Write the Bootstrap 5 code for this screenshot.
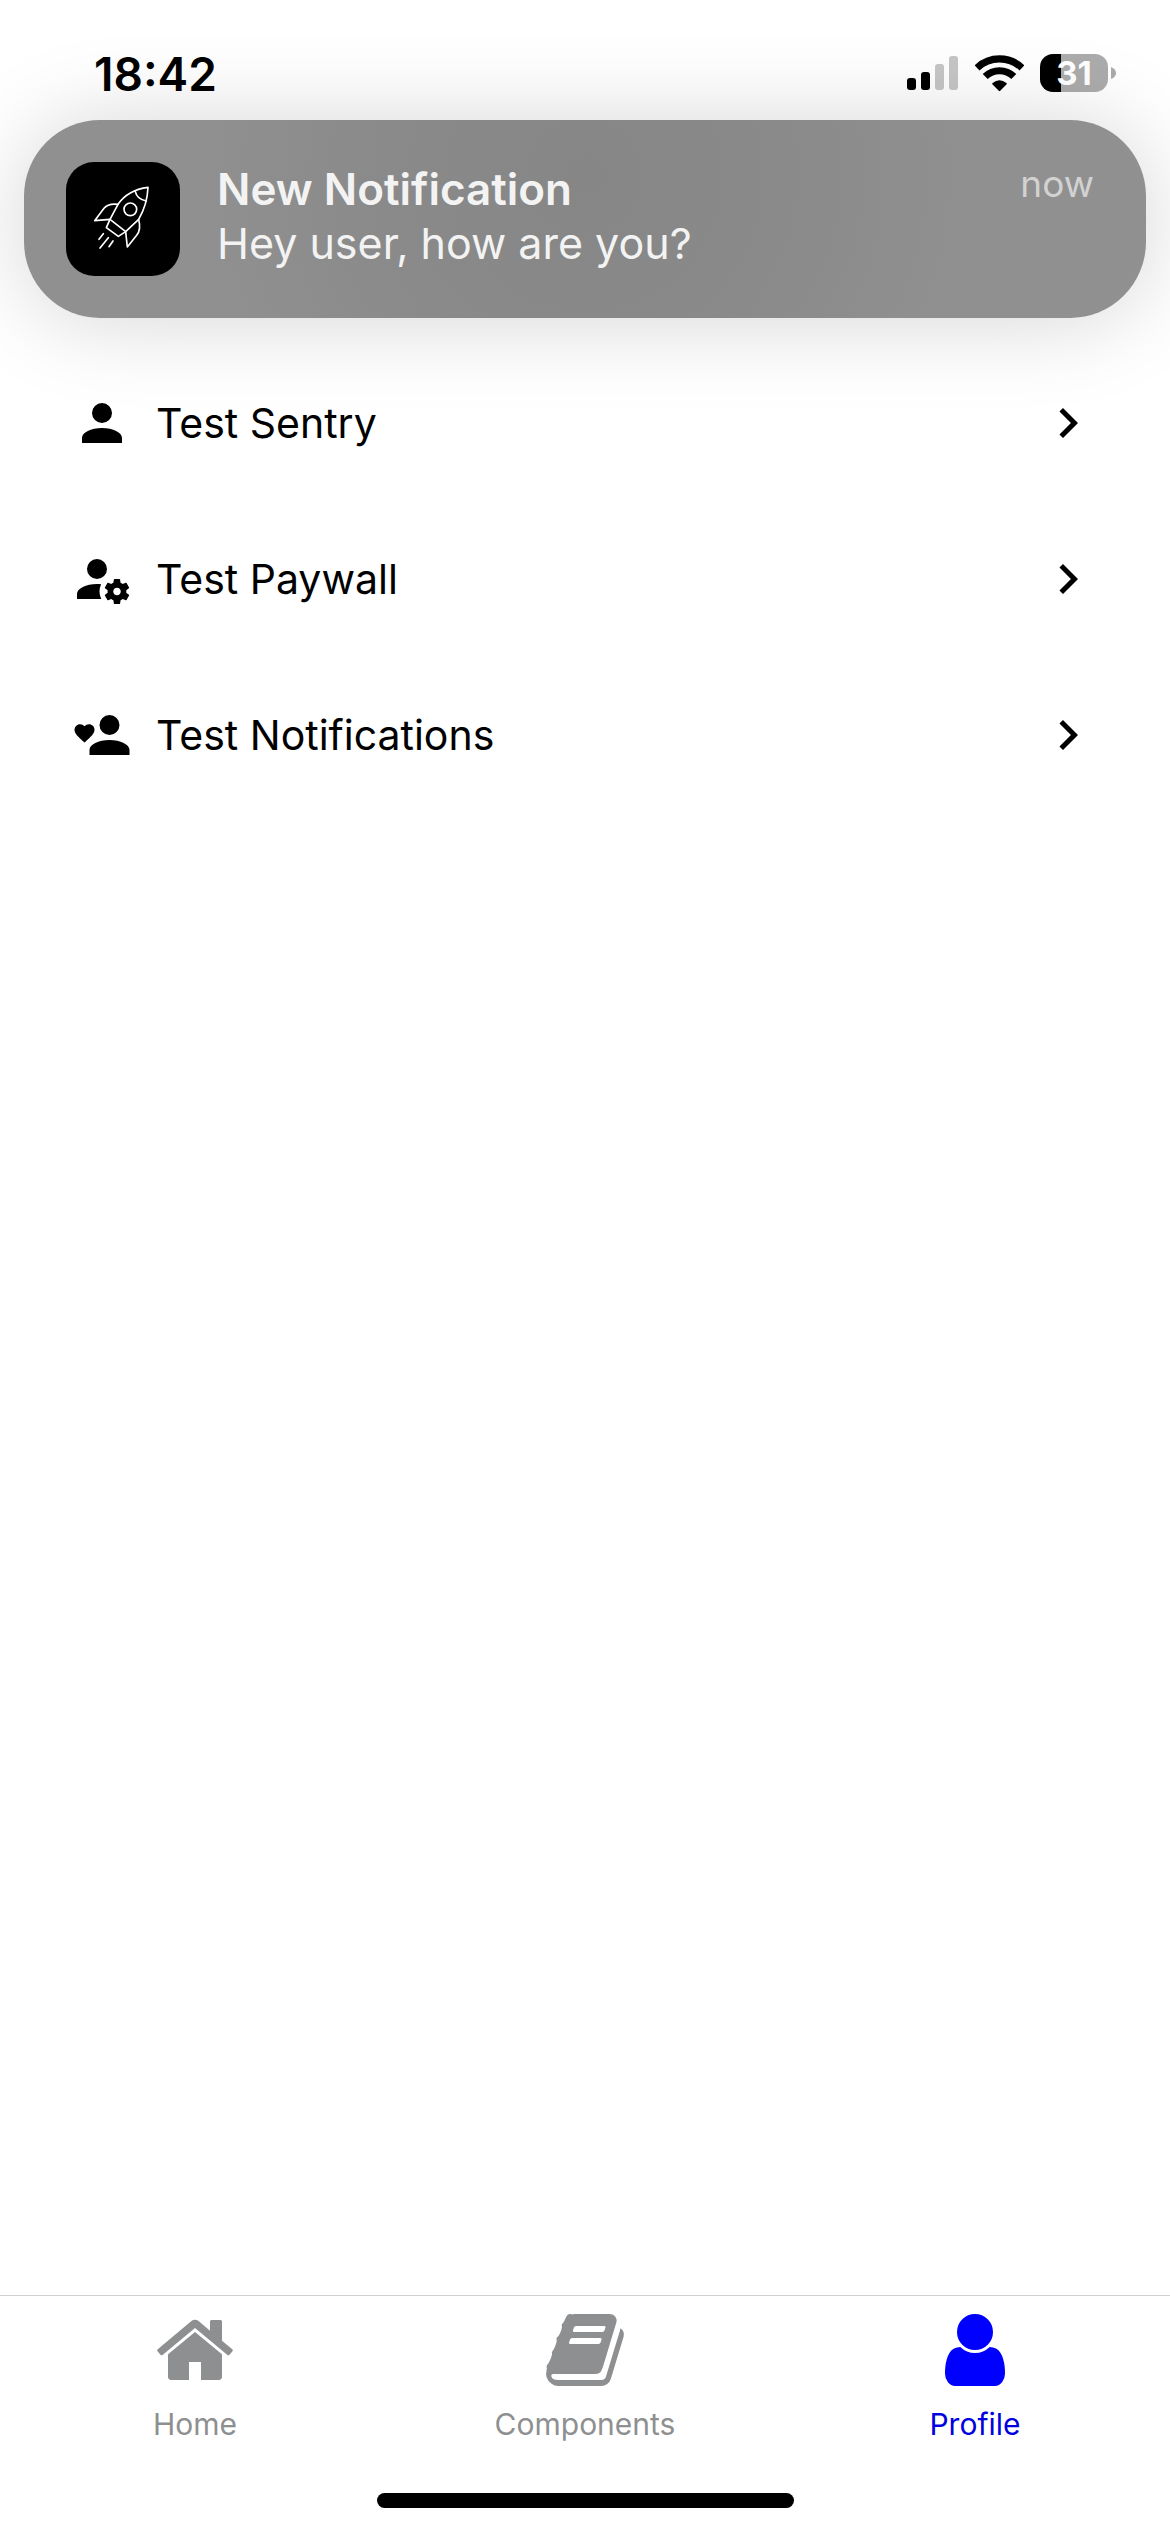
<!DOCTYPE html>
<html lang="en">
<head>
<meta charset="utf-8">
<meta name="viewport" content="width=device-width, initial-scale=1">
<title>Profile</title>
<link href="https://cdn.jsdelivr.net/npm/bootstrap@5.3.0/dist/css/bootstrap.min.css" rel="stylesheet">
<style>
  body { font-family: Inter, "Liberation Sans", sans-serif; background: #fff; color: #000; }
  svg { display: block; flex-shrink: 0; }

  .status-bar { height: 120px; padding: 46px 54px 0 94px; }
  .clock { font-size: 46px; line-height: 56px; font-weight: 600; }
  .battery { width: 68px; height: 38px; border-radius: 13px; color: #fff; font-size: 33px; line-height: 38px; font-weight: 700;
             background: linear-gradient(90deg, #000 31%, #acacac 31%); }

  .notice { margin: 0 24px; padding: 42px 52px 42px 42px; border-radius: 76px; color: #f3f3f3;
            background: radial-gradient(ellipse 34% 190% at 50% 28%, #858685, #8a8a8a 55%, #909090);
            box-shadow: 0 2px 90px rgba(0, 0, 0, .17); }
  .app-icon { border-radius: 28px; background: #000; }
  .notice-text { font-size: 43px; line-height: 54px; padding-left: 37px; }
  .notice-title { font-size: 44px; font-weight: 600; }
  .notice-time { font-size: 37px; line-height: 44px; color: #d2d2d2; }

  .menu { padding-top: 27px; }
  .menu-row { height: 156px; padding: 0 72px; gap: 24px; font-size: 41px; line-height: 52px; }

  .tabs { height: 183px; border-top: 1px solid #d0d0d0; }
  .tab { padding-top: 12px; gap: 14px; font-size: 30px; line-height: 36px; color: #8e8f90; }
  .tab.active { color: #0000e0; }
  .tab.active svg { color: #00f; }
  .home-bar { width: 417px; height: 15px; margin: 15px auto 24px; }
</style>
</head>
<body class="d-flex flex-column min-vh-100">

<header class="status-bar d-flex align-items-start justify-content-between">
  <span class="clock">18:42</span>
  <div class="d-flex align-items-center pt-2">
    <svg width="52" height="36" viewBox="0 0 52 36" role="img" aria-label="Signal">
      <rect x="0" y="23" width="9" height="12" rx="3"/>
      <rect x="14" y="17" width="9" height="18" rx="3"/>
      <rect x="28" y="9" width="9" height="26" rx="3" fill="#c6c6c6"/>
      <rect x="42" y="1" width="9" height="34" rx="3" fill="#c6c6c6"/>
    </svg>
    <svg class="ms-3 me-3" width="49" height="37" viewBox="0 0 48 36" role="img" aria-label="Wi-Fi">
      <path d="M2 12.5A32 32 0 0 1 46 12.5M10 21A20 20 0 0 1 38 21" fill="none" stroke="#000" stroke-width="7"/>
      <path d="M17 28.500Q16.500 28 17.200 27.300Q24 22 30.800 27.300Q31.500 28 31 28.500L24.700 35Q24 35.700 23.300 35Z"/>
    </svg>
    <span class="battery text-center">31</span>
    <svg width="8" height="12" viewBox="0 0 8 12" aria-hidden="true"><path d="M3 0Q8 2 8 6T3 12Z" fill="#acacac"/></svg>
  </div>
</header>

<section class="notice d-flex align-items-start" role="status">
  <svg class="app-icon" width="114" height="114" viewBox="0 0 342 342" fill="none" stroke="#fff" stroke-width="5" stroke-linejoin="round" stroke-linecap="round" aria-hidden="true">
    <path d="M246 76Q185 84 156 127L132 172L179 209L218 172Q244 128 246 76ZM208 89Q213 112 241 117"/>
    <circle cx="193" cy="142" r="19"/>
    <path d="M156 127Q127 123 114 139L86 176L132 172L121 197L157 223L179 209L184 255L212 220Q226 203 218 172"/>
    <path d="M112 215L99 232M127 227L102 258M141 237L129 254"/>
  </svg>
  <div class="notice-text flex-grow-1">
    <div class="notice-title">New Notification</div>
    <div>Hey user, how are you?</div>
  </div>
  <span class="notice-time">now</span>
</section>

<main class="menu flex-grow-1">
  <a href="#sentry" class="menu-row d-flex align-items-center text-reset text-decoration-none">
    <svg width="60" height="60" viewBox="0 0 24 24" aria-hidden="true"><path d="M12,4A4,4 0 0,1 16,8A4,4 0 0,1 12,12A4,4 0 0,1 8,8A4,4 0 0,1 12,4M12,14C16.42,14 20,15.79 20,18V20H4V18C4,15.79 7.58,14 12,14Z"/></svg>
    <span class="flex-grow-1">Test Sentry</span>
    <svg width="60" height="60" viewBox="0 0 24 24" aria-hidden="true"><path d="M8.59,16.58L13.17,12L8.59,7.41L10,6L16,12L10,18L8.59,16.58Z"/></svg>
  </a>
  <a href="#paywall" class="menu-row d-flex align-items-center text-reset text-decoration-none">
    <svg width="60" height="60" viewBox="0 0 24 24" aria-hidden="true"><path d="M10 4A4 4 0 0 0 6 8A4 4 0 0 0 10 12A4 4 0 0 0 14 8A4 4 0 0 0 10 4M17 12C16.87 12 16.76 12.09 16.74 12.21L16.55 13.53C16.25 13.66 15.96 13.82 15.7 14L14.46 13.5C14.35 13.5 14.22 13.5 14.15 13.63L13.15 15.36C13.09 15.47 13.11 15.6 13.21 15.68L14.27 16.5C14.25 16.67 14.24 16.83 14.24 17C14.24 17.17 14.25 17.33 14.27 17.5L13.21 18.32C13.12 18.4 13.09 18.53 13.15 18.64L14.15 20.37C14.21 20.5 14.34 20.5 14.46 20.5L15.7 20C15.96 20.18 16.24 20.35 16.55 20.47L16.74 21.79C16.76 21.91 16.86 22 17 22H19C19.11 22 19.22 21.91 19.24 21.79L19.43 20.47C19.73 20.34 20 20.18 20.27 20L21.5 20.5C21.63 20.5 21.76 20.5 21.83 20.37L22.83 18.64C22.89 18.53 22.86 18.4 22.77 18.32L21.7 17.5C21.72 17.33 21.74 17.17 21.74 17C21.74 16.83 21.73 16.67 21.7 16.5L22.76 15.68C22.85 15.6 22.88 15.47 22.82 15.36L21.82 13.63C21.76 13.5 21.63 13.5 21.5 13.5L20.27 14C20 13.82 19.73 13.65 19.42 13.53L19.23 12.21C19.22 12.09 19.11 12 19 12H17M10 14C5.58 14 2 15.79 2 18V20H11.68A7 7 0 0 1 11 17A7 7 0 0 1 11.64 14.09C11.11 14.03 10.56 14 10 14M18 15.5C18.83 15.5 19.5 16.17 19.5 17C19.5 17.83 18.83 18.5 18 18.5C17.16 18.5 16.5 17.83 16.5 17C16.5 16.17 17.17 15.5 18 15.5Z"/></svg>
    <span class="flex-grow-1">Test Paywall</span>
    <svg width="60" height="60" viewBox="0 0 24 24" aria-hidden="true"><path d="M8.59,16.58L13.17,12L8.59,7.41L10,6L16,12L10,18L8.59,16.58Z"/></svg>
  </a>
  <a href="#notifications" class="menu-row d-flex align-items-center text-reset text-decoration-none">
    <svg width="60" height="60" viewBox="0 0 24 24" aria-hidden="true"><path d="M15,14C10.58,14 7,15.79 7,18V20H23V18C23,15.79 19.42,14 15,14M15,12A4,4 0 0,0 19,8A4,4 0 0,0 15,4A4,4 0 0,0 11,8A4,4 0 0,0 15,12M5,15L4.4,14.5C2.4,12.6 1,11.4 1,9.9C1,8.7 2,7.7 3.2,7.7C3.9,7.7 4.6,8 5,8.5C5.4,8 6.1,7.7 6.8,7.7C8,7.7 9,8.6 9,9.9C9,11.4 7.6,12.6 5.6,14.5L5,15Z"/></svg>
    <span class="flex-grow-1">Test Notifications</span>
    <svg width="60" height="60" viewBox="0 0 24 24" aria-hidden="true"><path d="M8.59,16.58L13.17,12L8.59,7.41L10,6L16,12L10,18L8.59,16.58Z"/></svg>
  </a>
</main>

<footer>
  <nav class="tabs row g-0" aria-label="Main">
    <a href="#home" class="tab col d-flex flex-column align-items-center text-decoration-none">
      <svg width="84" height="84" viewBox="0 0 1792 1792" fill="currentColor" aria-hidden="true"><path d="M1472 992v480q0 26-19 45t-45 19h-384v-384h-256v384h-384q-26 0-45-19t-19-45v-480q0-1 .5-3t.5-3l575-474 575 474q1 2 1 6zm223-69l-62 74q-8 9-21 11h-3q-13 0-21-7l-692-577-692 577q-12 8-24 7-13-2-21-11l-62-74q-8-10-7-23.500t11-21.500l719-599q32-26 76-26t76 26l244 204v-195q0-14 9-23t23-9h192q14 0 23 9t9 23v408l219 182q10 8 11 21.500t-7 23.500z"/></svg>
      <span>Home</span>
    </a>
    <a href="#components" class="tab col d-flex flex-column align-items-center text-decoration-none">
      <svg width="84" height="84" viewBox="0 0 1792 1792" fill="currentColor" aria-hidden="true"><path d="M1703 478q40 57 18 129l-275 906q-19 64-76.500 107.500t-122.500 43.500h-923q-77 0-148.500-53.500t-99.500-131.500q-24-67-2-127 0-4 3-27t4-37q1-8-3-21.500t-3-19.500q2-11 8-21t16.500-23.500 16.500-23.500q23-38 45-91.500t30-91.500q3-10 .5-30t-.5-28q3-11 17-28t17-23q21-36 42-92t25-90q1-9-2.500-32t.5-28q4-13 22-30.500t22-22.500q19-26 42.500-84.500t27.500-96.500q1-8-3-25.500t-2-26.500q2-8 9-18t18-23 17-21q8-12 16.500-30.500t15-35 16-36 19.500-32 26.500-23.500 36-11.500 47.500 5.500l-1 3q38-9 51-9h761q74 0 114 56t18 130l-274 906q-36 119-71.500 153.500t-128.500 34.500h-869q-27 0-38 15-11 16-1 43 24 70 144 70h923q29 0 56-15.500t35-41.500l300-987q7-22 5-57 38 15 59 43zm-1064 2q-4 13 2 22.500t20 9.500h608q13 0 25.500-9.500t16.500-22.500l21-64q4-13-2-22.500t-20-9.500h-608q-13 0-25.500 9.500t-16.500 22.500zm-83 256q-4 13 2 22.500t20 9.500h608q13 0 25.500-9.500t16.500-22.500l21-64q4-13-2-22.500t-20-9.500h-608q-13 0-25.500 9.500t-16.500 22.500z"/></svg>
      <span>Components</span>
    </a>
    <a href="#profile" class="tab active col d-flex flex-column align-items-center text-decoration-none" aria-current="page">
      <svg width="84" height="84" viewBox="0 0 1792 1792" fill="currentColor" aria-hidden="true"><path d="M1536 1399q0 109-62.500 187t-150.500 78h-854q-88 0-150.500-78t-62.500-187q0-85 8.500-160.500t31.500-152 58.500-131 94-89 134.500-34.500q131 128 313 128t313-128q76 0 134.500 34.500t94 89 58.500 131 31.500 152 8.500 160.500zm-256-887q0 159-112.500 271.500t-271.500 112.500-271.500-112.500-112.500-271.500 112.500-271.500 271.500-112.500 271.500 112.500 112.500 271.500z"/></svg>
      <span>Profile</span>
    </a>
  </nav>
  <div class="home-bar bg-black rounded-pill"></div>
</footer>

<script src="https://cdn.jsdelivr.net/npm/bootstrap@5.3.0/dist/js/bootstrap.bundle.min.js"></script>
</body>
</html>
